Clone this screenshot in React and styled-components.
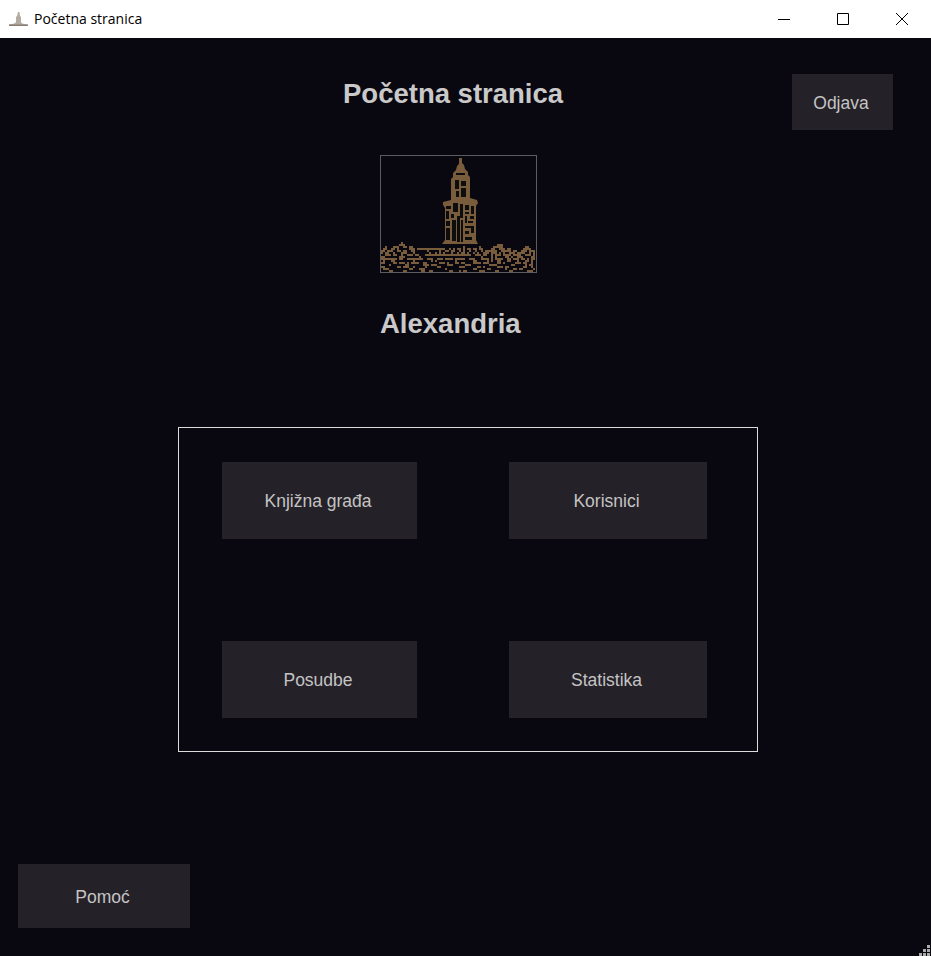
import React from 'react';
import styled, { createGlobalStyle } from 'styled-components';

const GlobalStyle = createGlobalStyle`
  html, body {
    margin: 0;
    padding: 0;
    background: #090710;
  }
`;

const Window = styled.div`
  position: relative;
  width: 931px;
  height: 956px;
  overflow: hidden;
  display: flex;
  flex-direction: column;
  background: #090710;
  font-family: "Liberation Sans", Arial, sans-serif;
`;

const TitleBar = styled.div`
  height: 38px;
  flex-shrink: 0;
  display: flex;
  align-items: center;
  background: #fff;
  color: #000;
  padding-left: 9px;
  font-family: "Open Sans", "Noto Sans", sans-serif;
  font-size: 14px;
`;

const TitleText = styled.span`
  margin-left: 6px;
  flex-grow: 1;
  margin-top: -1px;
`;

const WinButton = styled.div`
  width: 59px;
  height: 38px;
  display: flex;
  align-items: center;
  justify-content: center;
`;

const Content = styled.main`
  flex-grow: 1;
  display: flex;
  flex-direction: column;
  position: relative;
`;

const Header = styled.header`
  height: 56px;
  margin-top: 36px;
  display: grid;
  grid-template-columns: 792px 101px;
`;

const Heading = styled.h1`
  margin: 0;
  padding: 1px 0 0 343px;
  font-size: 27.5px;
  line-height: 38px;
  font-weight: 700;
  color: #c9c9c9;
  white-space: nowrap;
`;

const Button = styled.button`
  width: ${props => props.$w}px;
  height: ${props => props.$h}px;
  display: flex;
  align-items: center;
  justify-content: center;
  padding: 2px 3px 0 0;
  border: none;
  background: #242128;
  color: #c4c4c4;
  font-family: inherit;
  font-size: 17.5px;
`;

const Logo = styled.div`
  box-sizing: border-box;
  width: 157px;
  height: 118px;
  margin: 25px 0 0 380px;
  border: 1px solid #5c5c5f;
  line-height: 0;
`;

const Name = styled.h2`
  margin: 35px 0 0 380px;
  font-size: 27.5px;
  line-height: 32px;
  font-weight: 700;
  color: #c9c9c9;
`;

const Panel = styled.section`
  box-sizing: border-box;
  width: 580px;
  height: 325px;
  margin: 87px 0 0 178px;
  padding: 34px 0 0 43px;
  border: 1px solid #dcdcdc;
  display: grid;
  grid-template-columns: 195px 198px;
  grid-template-rows: 77px 77px;
  column-gap: 92px;
  row-gap: 102px;
`;

const Footer = styled.footer`
  margin: 112px 0 0 18px;
`;

const Grip = styled.svg`
  position: absolute;
  right: 0;
  bottom: 0;
`;

const brown = '#795b3a';
const night = '#090710';

// skyline under the tower, one character per 2px cell
const skyline = [
  '..............................................................................',
  '..........#...................................................................',
  '.........###..............................................###..................',
  '..#...###..##.##.........................#.......#......#####...........##....',
  '.##..##.#.....###.##############..#.#.##.#.##.##.##....##..###.##......####...',
  '##.###..##.##..##......#.....#..##.##..#.#..#..#..#.######..#####.##..###.###.',
  '#.##..#...###...#.......#..#.#.#...#..#.##.#..#.#..###.###.#.#..###.####..#.#.',
  '..###.##..#..###.##...#######################..###.##..#.###.####.####..###.#.',
  '##.......###.......#..............................#....#.#....##.#..###....##.',
  '########.##..########..###..###.####.#####..###...####.#.####..##.###.##.#.##.',
  '.#...##.........#........#.#.........#........##.....#.#..##...##...#...##.#.',
  '##....##.###.#.####..##......###.#...##.##....####.###....##.#.....###.##..#.',
  '....#.......##.......###.###.....###......###.........####.......##.....#.##.',
  '##......##.###..#.....#.....##.........###......##.#......###.##.......##..#.',
  '.###..........##...###..........#.............##.....##.......#...##.##.....#.',
  '....##.....##.......##..##........##...#.##......###.....##.....##.......###.',
];

const TowerIcon = () => (
  <svg width="155" height="116" viewBox="0 0 155 116">
    <defs>
      <filter id="soften" x="-5%" y="-5%" width="110%" height="110%">
        <feGaussianBlur stdDeviation="0.55" />
      </filter>
    </defs>
    <g filter="url(#soften)">
      {/* tower silhouette */}
      <path
        fill={brown}
        d="M78 2h3v5l2 2 1 4 3 3v3l2 2v21l7 2 1 3-2 3v34l2 4H61l3-4V52l-2-3v-3l8-2V23l2-2v-4l3-3 1-4 2-2z"
      />
      {/* openings in the stonework */}
      <g fill={night}>
        <path d="M75 17h9v2h-9zM74 24h4v9h-4zM80 25h5v5h-5zM75 35h3v6h-3zM80 32h5v9h-5z" />
        <path d="M65 50h5v3h-5zM72 47h5v9h-5zM79 48h3v14h-3zM84 49h4v5h-4zM90 50h3v8h-3zM65 55h3v8h-3z" />
        <path d="M70 58h3v4h-3zM84 56h4v2h-4zM89 60h4v3h-4zM84 60h2v7h-2zM65 65h4v5h-4zM87 65h5v2h-5z" />
        <path d="M71 64h4v21h-4zM76 60h3v26h-3zM80 64h2v22h-2zM84 70h6v2h-6zM65 72h4v12h-4zM84 75h4v3h-4zM90 70h3v7h-3zM84 81h7v3h-7z" />
      </g>
      {/* town skyline */}
      <g fill={brown}>
        {skyline.map((row, r) =>
          [...row].map((cell, c) =>
            cell === '#' ? <rect key={`${r}-${c}`} x={c * 2} y={84 + r * 2} width="2" height="2" /> : null
          )
        )}
      </g>
    </g>
  </svg>
);

const AppIcon = () => (
  <svg width="19" height="14" viewBox="0 0 19 14" aria-hidden="true">
    <path d="M9 0h1.500l.5 4 1 1v5l1 1.500 5.500 1V14H0v-1.500l5.500-1L7 10V5l1-1z" fill="#b5aca1" />
    <path d="M0 12.500h19V14H0z" fill="#8a7f72" />
  </svg>
);

const Minimize = () => (
  <svg width="12" height="12" viewBox="0 0 12 12"><path d="M0 6.500h12" stroke="#000" strokeWidth="1" /></svg>
);

const Maximize = () => (
  <svg width="12" height="12" viewBox="0 0 12 12"><path d="M.5.500h11v11H.500z" fill="none" stroke="#000" /></svg>
);

const Close = () => (
  <svg width="12" height="12" viewBox="0 0 12 12"><path d="M0 0l12 12M12 0L0 12" stroke="#000" strokeWidth="1" /></svg>
);

const gripDots = [[8, 1], [4, 5], [8, 5], [0, 9], [4, 9], [8, 9]];

export default function App() {
  return (
    <Window>
      <GlobalStyle />
      <TitleBar>
        <AppIcon />
        <TitleText>Početna stranica</TitleText>
        <WinButton><Minimize /></WinButton>
        <WinButton><Maximize /></WinButton>
        <WinButton><Close /></WinButton>
      </TitleBar>
      <Content>
        <Header>
          <Heading>Početna stranica</Heading>
          <Button $w={101} $h={56}>Odjava</Button>
        </Header>
        <Logo><TowerIcon /></Logo>
        <Name>Alexandria</Name>
        <Panel>
          <Button $w={195} $h={77}>Knjižna građa</Button>
          <Button $w={198} $h={77}>Korisnici</Button>
          <Button $w={195} $h={77}>Posudbe</Button>
          <Button $w={198} $h={77}>Statistika</Button>
        </Panel>
        <Footer>
          <Button $w={172} $h={64}>Pomoć</Button>
        </Footer>
        <Grip width="12" height="12" viewBox="0 0 12 12">
          {gripDots.map(([x, y]) => (
            <rect key={`${x}-${y}`} x={x} y={y} width="3" height="3" fill="#a9a9a9" />
          ))}
        </Grip>
      </Content>
    </Window>
  );
}
